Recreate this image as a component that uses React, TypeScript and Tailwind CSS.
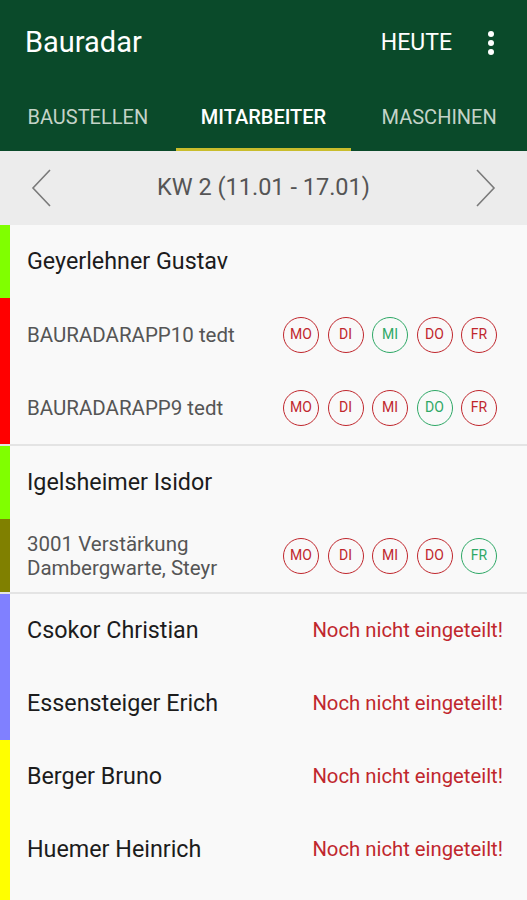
import React from "react";

type Day = { d: string; ok: boolean };

const RED = "#c0272d";
const GREEN = "#2ea866";

function Days({ days }: { days: Day[] }) {
  return (
    <div className="flex gap-[8.5px]">
      {days.map((x) => (
        <div
          key={x.d}
          className="w-[36px] h-[36px] rounded-full border-[1.5px] flex items-center justify-center text-[14px]"
          style={{ borderColor: x.ok ? GREEN : RED, color: x.ok ? GREEN : RED }}
        >
          {x.d}
        </div>
      ))}
    </div>
  );
}

const mk = (ok: string) =>
  ["MO", "DI", "MI", "DO", "FR"].map((d) => ({ d, ok: d === ok }));

function NameRow({ name, status }: { name: string; status?: boolean }) {
  return (
    <div className="h-[73px] flex items-center justify-between pl-[17px] pr-[24px]">
      <span className="text-[23.3px] text-[#1c1c1c]">{name}</span>
      {status && <span className="text-[20.3px] text-[#c0272d]">Noch nicht eingeteilt!</span>}
    </div>
  );
}

function SubRow({ lines, days }: { lines: string[]; days: Day[] }) {
  return (
    <div className="h-[73px] flex items-center justify-between pl-[17px] pr-[30px]">
      <div className="flex flex-col text-[20.5px] leading-[24px] text-[#555555]">
        {lines.map((l) => (
          <span key={l}>{l}</span>
        ))}
      </div>
      <Days days={days} />
    </div>
  );
}

function Group({ children, stripes }: { children: React.ReactNode[]; stripes: string[] }) {
  return (
    <div className="flex flex-col shrink-0">
      {children.map((c, i) => (
        <div key={i} className="flex shrink-0">
          <div className="w-[10px] shrink-0" style={{ background: stripes[i] }} />
          <div className="flex-1">{c}</div>
        </div>
      ))}
    </div>
  );
}

export default function App() {
  return (
    <div
      className="w-[527px] h-[900px] overflow-hidden bg-[#f9f9f9] flex flex-col"
      style={{ fontFamily: "Roboto, 'Noto Sans', sans-serif" }}
    >
      <div className="bg-[#0a4a2a] flex flex-col shrink-0">
        <div className="h-[86px] flex items-center justify-between pl-[25px] pr-[33px]">
          <span className="text-[29px] text-white">Bauradar</span>
          <div className="flex items-center gap-[36px]">
            <span className="text-[23px] text-white">HEUTE</span>
            <div className="flex flex-col gap-[3px] items-center">
              <div className="w-[6px] h-[6px] rounded-full bg-white" />
              <div className="w-[6px] h-[6px] rounded-full bg-white" />
              <div className="w-[6px] h-[6px] rounded-full bg-white" />
            </div>
          </div>
        </div>
        <div className="h-[65px] grid grid-cols-3">
          <div className="flex items-center justify-center text-[20px] text-[#c4d3c8] pb-[3px]">
            BAUSTELLEN
          </div>
          <div className="flex items-center justify-center text-[20px] font-medium text-white border-b-[3px] border-[#c9bd2c]">
            MITARBEITER
          </div>
          <div className="flex items-center justify-center text-[20px] text-[#c4d3c8] pb-[3px]">
            MASCHINEN
          </div>
        </div>
      </div>
      <div className="h-[74px] shrink-0 bg-[#ececec] flex items-center justify-between px-[30px]">
        <svg width="24" height="40" viewBox="0 0 24 40">
          <path d="M20 2 L3 20 L20 38" fill="none" stroke="#7a7a7a" strokeWidth="1.6" />
        </svg>
        <span className="text-[23.5px] text-[#555555]">KW 2 (11.01 - 17.01)</span>
        <svg width="24" height="40" viewBox="0 0 24 40">
          <path d="M4 2 L21 20 L4 38" fill="none" stroke="#7a7a7a" strokeWidth="1.6" />
        </svg>
      </div>
      <Group stripes={["#80ff00", "#ff0000", "#ff0000"]}>
        {[
          <NameRow key="a" name="Geyerlehner Gustav" />,
          <SubRow key="b" lines={["BAURADARAPP10 tedt"]} days={mk("MI")} />,
          <SubRow key="c" lines={["BAURADARAPP9 tedt"]} days={mk("DO")} />,
        ]}
      </Group>
      <div className="h-[2px] shrink-0 bg-[#e4e4e4]" />
      <Group stripes={["#80ff00", "#808000"]}>
        {[
          <NameRow key="a" name="Igelsheimer Isidor" />,
          <SubRow key="b" lines={["3001 Verstärkung", "Dambergwarte, Steyr"]} days={mk("FR")} />,
        ]}
      </Group>
      <div className="h-[2px] shrink-0 bg-[#e4e4e4]" />
      <Group stripes={["#8080ff", "#8080ff", "#ffff00", "#ffff00", "#ffff00"]}>
        {[
          <NameRow key="a" name="Csokor Christian" status />,
          <NameRow key="b" name="Essensteiger Erich" status />,
          <NameRow key="c" name="Berger Bruno" status />,
          <NameRow key="d" name="Huemer Heinrich" status />,
          <NameRow key="e" name="" />,
        ]}
      </Group>
    </div>
  );
}
